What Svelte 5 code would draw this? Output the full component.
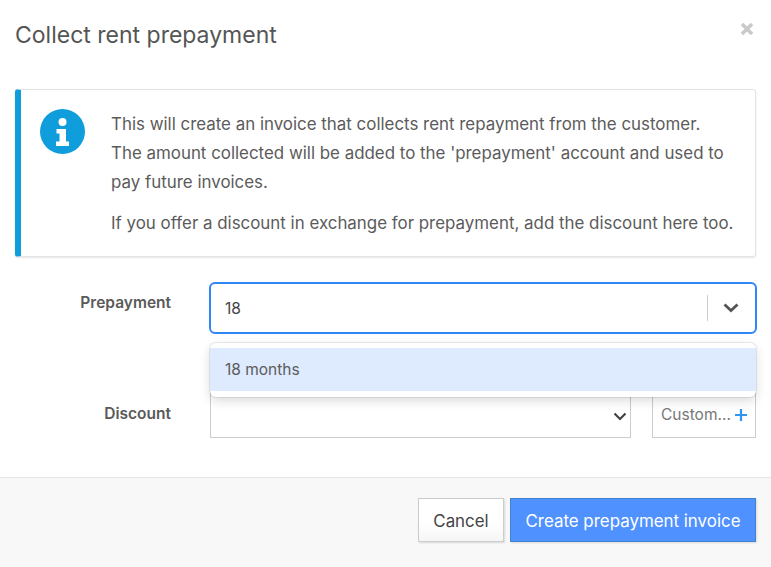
<script lang="ts">
    const title = 'Collect rent prepayment';
    let prepayment = $state('18');
</script>

<div class="modal">
    <header class="modal-header">
        <h2>{title}</h2>
        <button class="close" aria-label="Close">
            <svg width="16" height="16" viewBox="0 0 16 16">
                <path d="M3 3l10 10M13 3L3 13" fill="none" stroke="#c9c9c9" stroke-width="3.600" />
            </svg>
        </button>
    </header>

    <div class="modal-body">
        <div class="alert">
            <svg class="alert-icon" width="45" height="45" viewBox="0 0 45 45">
                <circle cx="22.5" cy="22.5" r="22.5" fill="#0f9ddb" />
                <circle cx="22.5" cy="13" r="4" fill="#fff" />
                <path d="M16.5 20h9.500v12.500h3V37h-13v-4.500h3.500v-8h-3z" fill="#fff" />
            </svg>
            <div class="alert-text">
                <p>This will create an invoice that collects rent repayment from the customer. The amount collected will be added to the 'prepayment' account and used to pay future invoices.</p>
                <p>If you offer a discount in exchange for prepayment, add the discount here too.</p>
            </div>
        </div>

        <div class="form-row first">
            <span class="label">Prepayment</span>
            <div class="combo">
                <div class="combo-control">
                    <input class="combo-input" bind:value={prepayment} />
                    <span class="combo-sep"></span>
                    <svg class="combo-arrow" width="16" height="10" viewBox="0 0 16 10">
                        <path d="M1.500 1.500L8 7.500l6.500-6" fill="none" stroke="#555" stroke-width="2.800" />
                    </svg>
                </div>
                <div class="combo-menu">
                    <div class="combo-option">18 months</div>
                </div>
            </div>
        </div>

        <div class="form-row second">
            <span class="label">Discount</span>
            <div class="discount-select">
                <svg width="14" height="9" viewBox="0 0 14 9">
                    <path d="M1.500 1.500L7 7l5.500-5.500" fill="none" stroke="#444" stroke-width="2.200" />
                </svg>
            </div>
            <div class="custom">
                <span class="custom-text">Custom...</span>
                <svg width="14" height="14" viewBox="0 0 14 14">
                    <path d="M7 1v12M1 7h12" fill="none" stroke="#2f96ee" stroke-width="2.200" />
                </svg>
            </div>
        </div>
    </div>

    <footer class="modal-footer">
        <button class="btn btn-default">Cancel</button>
        <button class="btn btn-primary">Create prepayment invoice</button>
    </footer>
</div>

<style>
    :global(body) {
        margin: 0;
        background: #fff;
    }

    .modal {
        width: 771px;
        height: 567px;
        display: flex;
        flex-direction: column;
        font-family: Inter, "Liberation Sans", sans-serif;
        color: #555;
        overflow: hidden;
    }

    .modal-header {
        display: flex;
        justify-content: space-between;
        align-items: flex-start;
        height: 89px;
        box-sizing: border-box;
        padding: 20px 16px 0 15px;
    }

    h2 {
        margin: 0;
        padding-top: 1px;
        font-size: 23px;
        font-weight: 400;
        line-height: 28px;
        color: #555;
    }

    .close {
        border: 0;
        background: none;
        padding: 0;
        margin-top: 1px;
        display: flex;
    }

    .modal-body {
        flex: 1;
        padding: 0 15px;
    }

    .alert {
        display: flex;
        width: 741px;
        height: 168px;
        box-sizing: border-box;
        border: 1px solid #e4e4e4;
        border-left: 6px solid #0f9ddb;
        border-radius: 3px;
        box-shadow: 0 1px 2px rgba(0, 0, 0, 0.1);
        padding: 19px 20px 0 19px;
        gap: 26px;
    }

    .alert-icon {
        flex: none;
    }

    .alert-text {
        padding-top: 1px;
        font-size: 16.900px;
        line-height: 29px;
        color: #5b5b5b;
        max-width: 624px;
    }

    .alert-text p {
        margin: 0 0 12px;
    }

    .form-row {
        display: flex;
        align-items: flex-start;
    }

    .first {
        margin-top: 25px;
    }

    .second {
        margin-top: 52px;
    }

    .label {
        flex: none;
        width: 156px;
        text-align: right;
        margin-right: 38px;
        font-size: 15.500px;
        font-weight: 600;
        color: #5a5a5a;
        line-height: 20px;
    }

    .first .label {
        margin-top: 11px;
    }

    .second .label {
        margin-top: 18px;
        margin-right: 39px;
    }

    .combo {
        flex: none;
        position: relative;
        width: 548px;
    }

    .combo-control {
        height: 52px;
        box-sizing: border-box;
        border: 2px solid #2f86f6;
        border-radius: 6px;
        display: flex;
        align-items: center;
        padding: 0 16px 0 14px;
    }

    .combo-input {
        flex: 1;
        border: 0;
        outline: 0;
        padding: 0;
        min-width: 0;
        font: inherit;
        font-size: 15.500px;
        color: #444;
    }

    .combo-sep {
        width: 1px;
        height: 26px;
        background: #ccc;
        margin-right: 15px;
    }

    .combo-menu {
        position: absolute;
        top: 61px;
        left: 1px;
        right: 1px;
        background: #fff;
        border-radius: 6px;
        padding: 5px 0 6px;
        box-shadow: 0 0 0 1px rgba(0, 0, 0, 0.08), 0 4px 11px rgba(0, 0, 0, 0.14);
        z-index: 2;
    }

    .combo-option {
        height: 43px;
        line-height: 43px;
        padding: 0 15px;
        background: #deebff;
        font-size: 15.500px;
        color: #5b5b5b;
    }

    .discount-select {
        flex: none;
        width: 421px;
        height: 52px;
        box-sizing: border-box;
        border: 1px solid #ccc;
        display: flex;
        align-items: flex-end;
        justify-content: flex-end;
        padding: 0 3px 16px 0;
    }

    .custom {
        flex: none;
        width: 104px;
        height: 52px;
        margin-left: 21px;
        box-sizing: border-box;
        border: 1px solid #ccc;
        display: flex;
        align-items: flex-end;
        justify-content: space-between;
        padding: 0 7px 15px 8px;
        font-size: 15.500px;
        color: #777;
    }

    .custom-text {
        line-height: 16px;
        margin-bottom: -1px;
        white-space: nowrap;
    }

    .modal-footer {
        height: 90px;
        box-sizing: border-box;
        border-top: 1px solid #e5e5e5;
        background: #f8f8f8;
        display: flex;
        justify-content: flex-end;
        align-items: flex-start;
        gap: 6px;
        padding: 20px 15px 0 0;
    }

    .btn {
        height: 44px;
        box-sizing: border-box;
        font: inherit;
        font-size: 16.900px;
        padding: 1px 0 0;
        box-shadow: 1px 1px 2px rgba(0, 0, 0, 0.12);
    }

    .btn-default {
        width: 86px;
        border: 1px solid #ccc;
        background: linear-gradient(#fff, #fff 60%, #f5f5f5);
        color: #444;
    }

    .btn-primary {
        width: 246px;
        border: 1px solid #3f85cc;
        background: #4f91ff;
        color: #fff;
    }
</style>
